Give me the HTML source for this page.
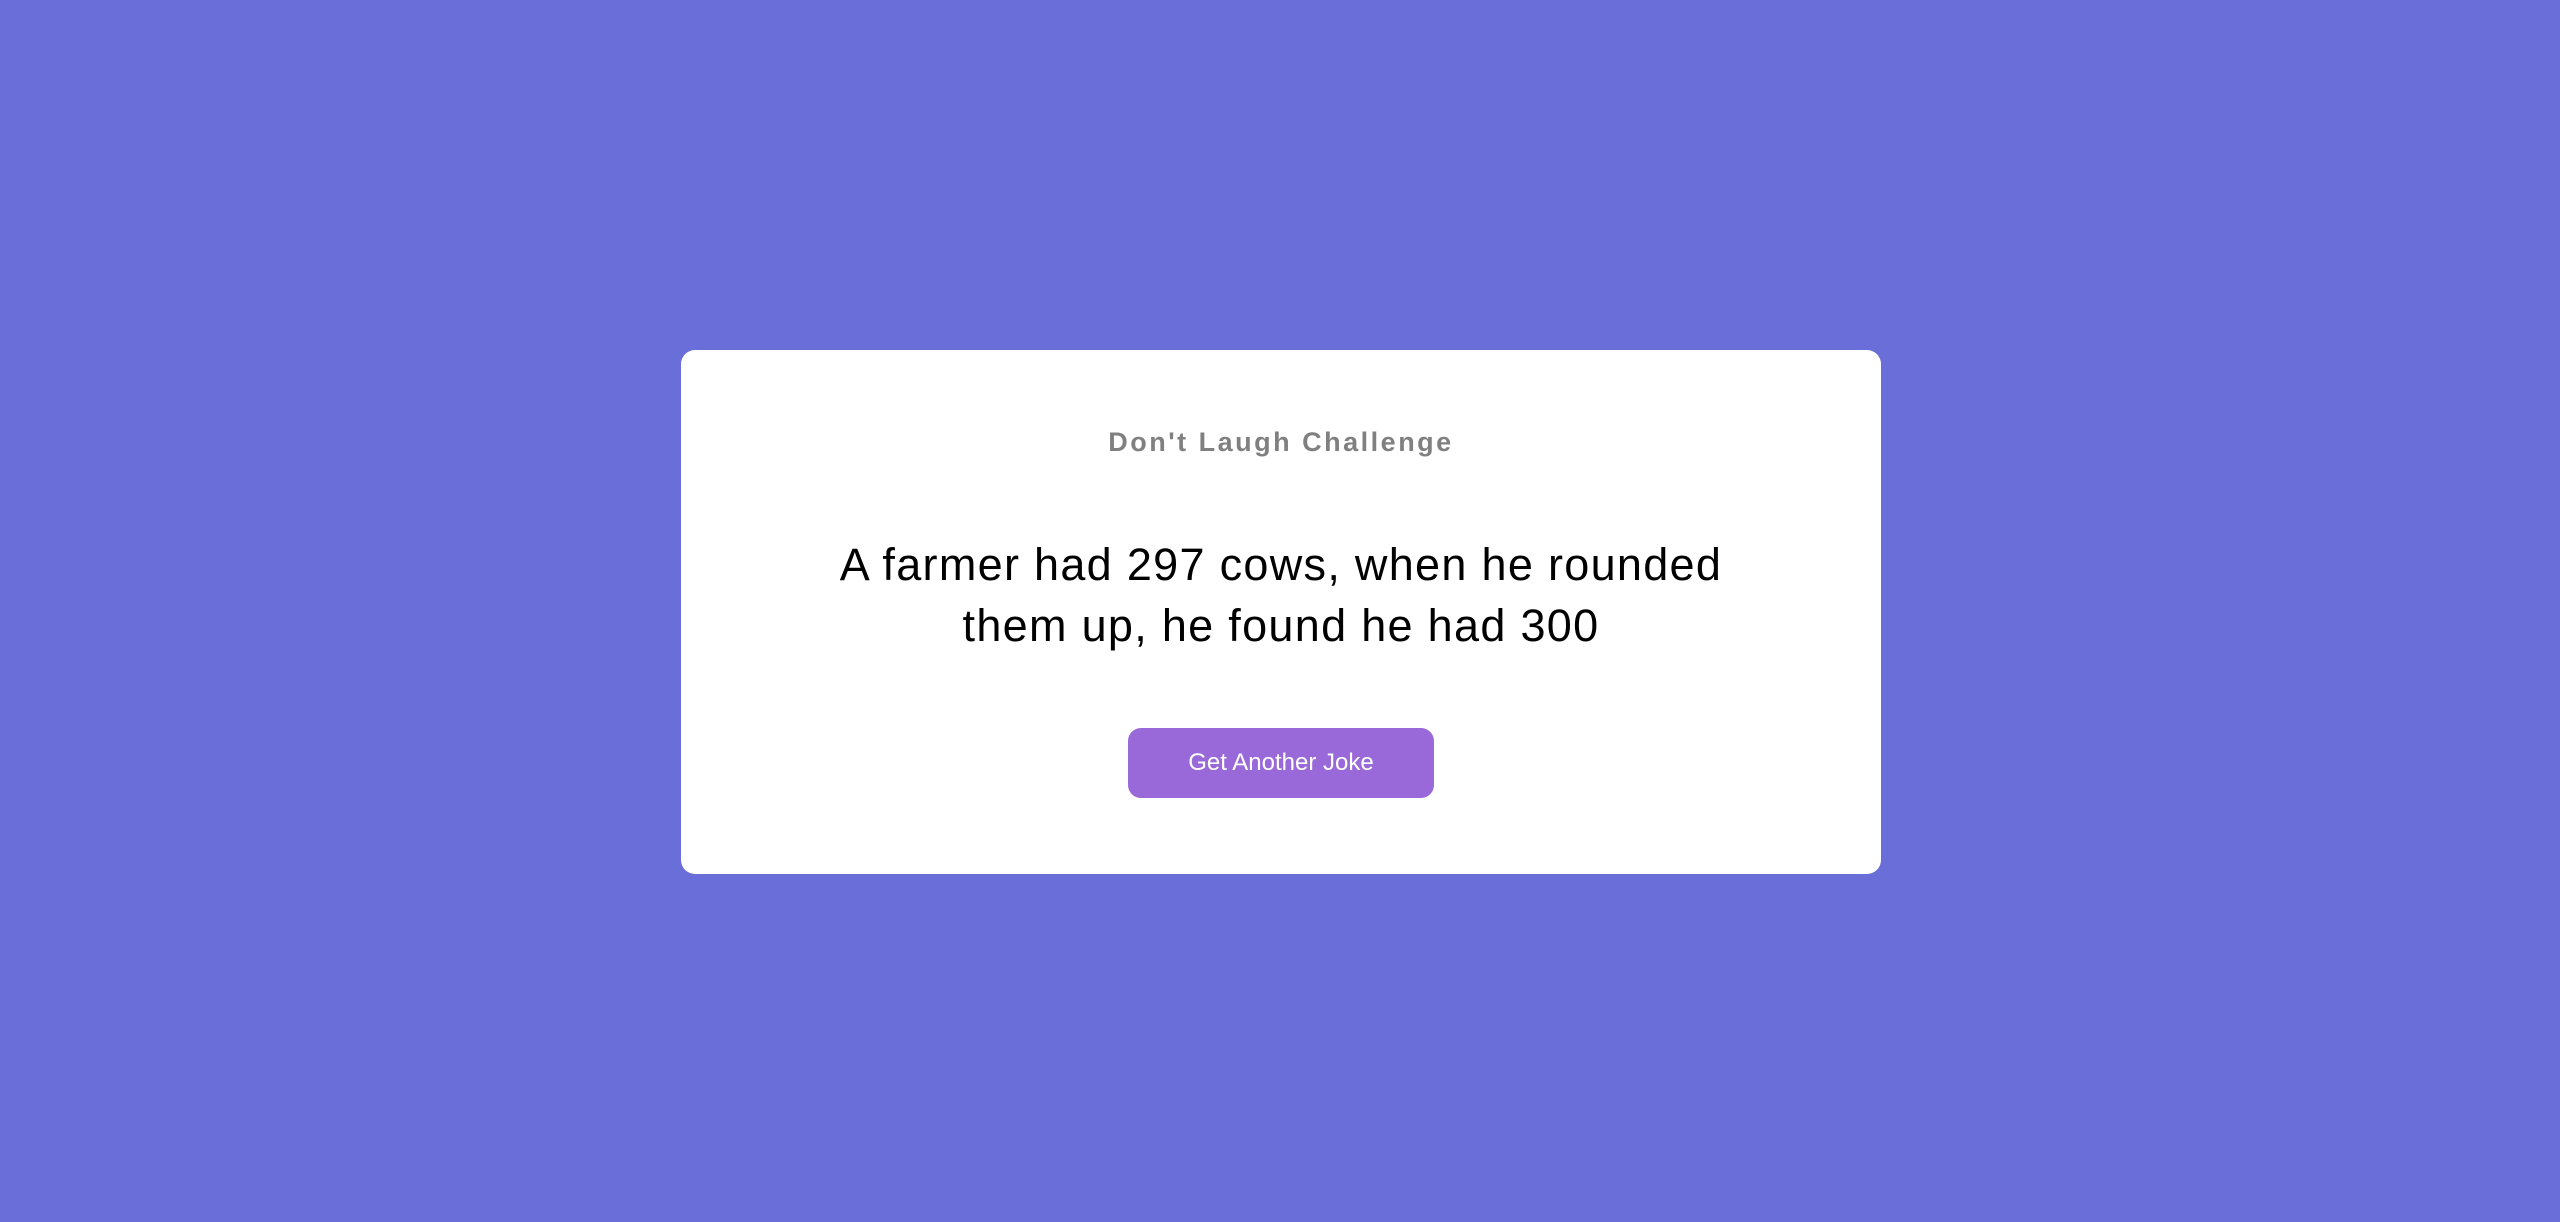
<!DOCTYPE html>
<html><head><style>
html,body{margin:0;padding:0;width:2560px;height:1222px;background:#6a6ed9;overflow:hidden}
.card{position:absolute;left:681px;top:350px;width:1200px;height:524px;background:#fff;border-radius:14px;text-align:center;font-family:"Liberation Sans",sans-serif}
h3{position:absolute;top:76px;left:0;right:0;margin:0;font-size:27px;font-weight:bold;color:#808080;letter-spacing:2.5px;line-height:32px}
p{position:absolute;top:184px;left:100px;right:100px;margin:0;font-size:45px;line-height:61px;color:#000;letter-spacing:1.3px}
button{position:absolute;left:447px;top:378px;width:306px;height:70px;border:0;outline:0;border-radius:13px;background:#9a69d9;color:#fff;font-family:"Liberation Sans",sans-serif;font-size:24px;padding:0}
</style></head><body>
<div class="card">
<h3>Don't Laugh Challenge</h3>
<p>A farmer had 297 cows, when he rounded them up, he found he had 300</p>
<button>Get Another Joke</button>
</div>
</body></html>
